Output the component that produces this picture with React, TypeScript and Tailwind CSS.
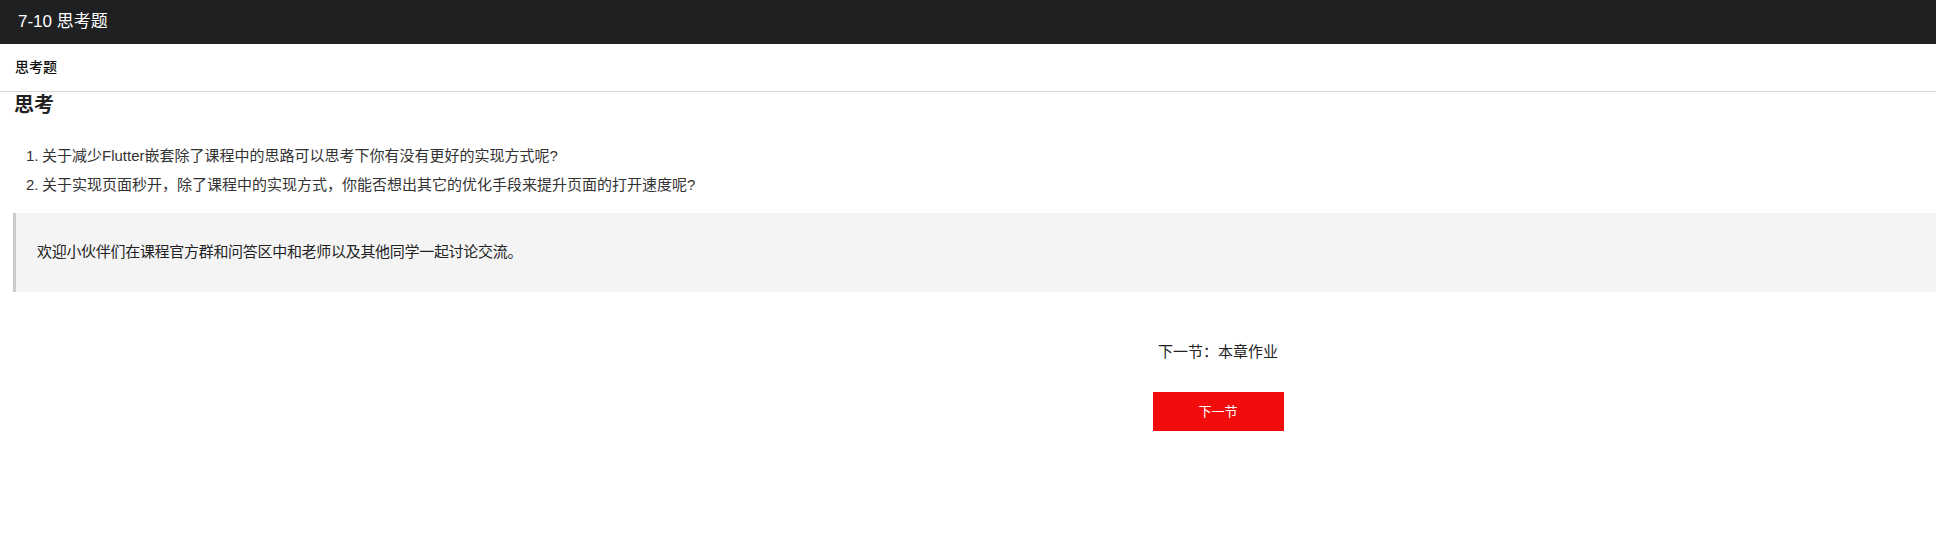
import React from "react";

const questions = [
  "关于减少Flutter嵌套除了课程中的思路可以思考下你有没有更好的实现方式呢?",
  "关于实现页面秒开，除了课程中的实现方式，你能否想出其它的优化手段来提升页面的打开速度呢?",
];

const font = { fontFamily: '"Liberation Sans", "Noto Sans CJK SC", sans-serif' };

export default function App() {
  return (
    <div className="min-h-[546px] w-full bg-white text-[#222]" style={font}>
      <header className="flex h-[44px] items-center bg-[#1f2022] pl-[18px] text-[17px] text-white">
        7-10 思考题
      </header>

      <div className="flex h-[48px] items-center border-b border-[#d4d5d8] pl-[15px] text-[14px] font-medium text-[#111]">
        思考题
      </div>

      <h2 className="pl-[14px] pt-[1px] text-[20px] font-bold leading-[24px] text-[#222]">思考</h2>

      <ol className="mt-[29px] flex flex-col gap-[9px] text-[15px] leading-[20px] text-[#333]">
        {questions.map((q, i) => (
          <li key={i} className="flex pl-[26px]">
            <span className="w-[16px]">{i + 1}.</span>
            <span>{q}</span>
          </li>
        ))}
      </ol>

      <blockquote className="ml-[13px] mt-[18px] flex h-[79px] items-center border-l-[3px] border-[#cccccc] bg-[#f4f4f4] pl-[21px] text-[15px] tracking-[-0.3px] text-[#222]">
        欢迎小伙伴们在课程官方群和问答区中和老师以及其他同学一起讨论交流。
      </blockquote>

      <div className="flex flex-col items-center pl-[500px] pt-[52px]">
        <p className="text-[15px] leading-[16px] text-[#222]">下一节：本章作业</p>
        <button
          type="button"
          className="mt-[32px] h-[39px] w-[131px] bg-[#f20d0d] text-[13px] text-white"
        >
          下一节
        </button>
      </div>
    </div>
  );
}
